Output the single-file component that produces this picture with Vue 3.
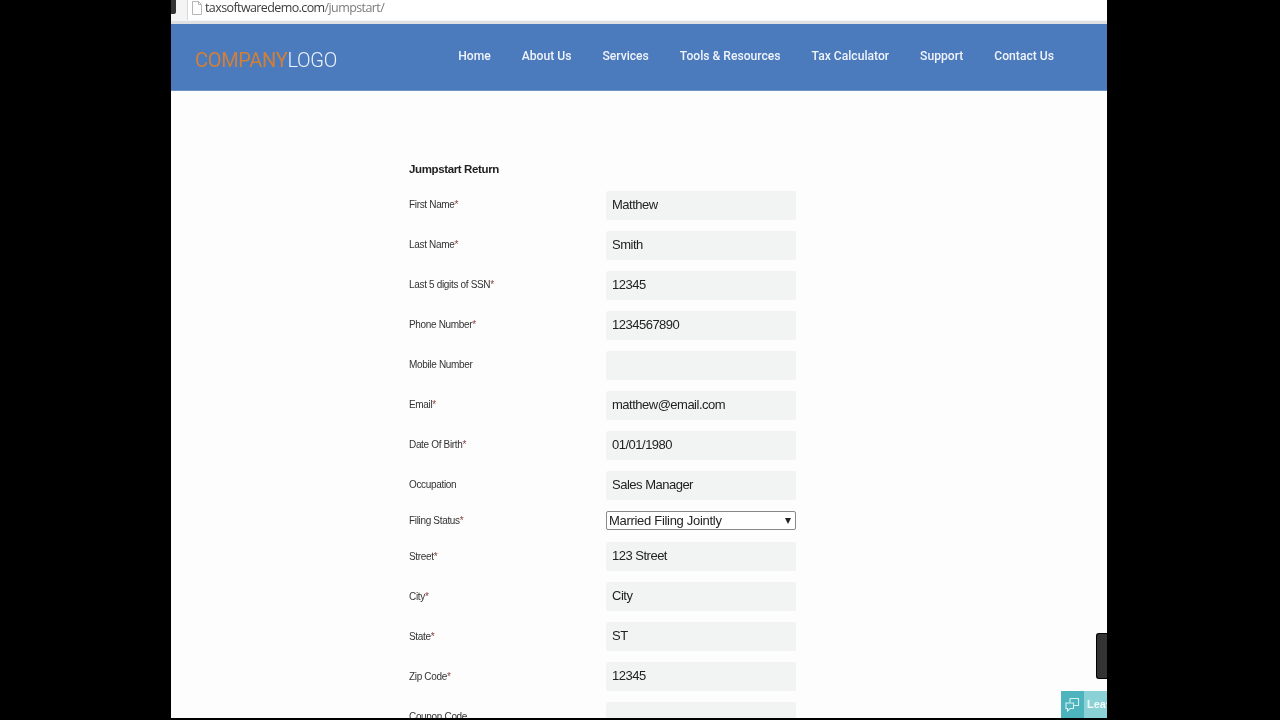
<script setup>
const nav = ['Home', 'About Us', 'Services', 'Tools & Resources', 'Tax Calculator', 'Support', 'Contact Us']
const fieldsTop = [
  { label: 'First Name', req: true, value: 'Matthew' },
  { label: 'Last Name', req: true, value: 'Smith' },
  { label: 'Last 5 digits of SSN', req: true, value: '12345' },
  { label: 'Phone Number', req: true, value: '1234567890' },
  { label: 'Mobile Number', req: false, value: '' },
  { label: 'Email', req: true, value: 'matthew@email.com' },
  { label: 'Date Of Birth', req: true, value: '01/01/1980' },
  { label: 'Occupation', req: false, value: 'Sales Manager' }
]
const fieldsBottom = [
  { label: 'Street', req: true, value: '123 Street' },
  { label: 'City', req: true, value: 'City' },
  { label: 'State', req: true, value: 'ST' },
  { label: 'Zip Code', req: true, value: '12345' },
  { label: 'Coupon Code', req: false, value: '' }
]
</script>

<template>
  <div class="screen">
    <div class="window">
      <div class="browser-bar">
        <div class="cursor-mark"></div>
        <div class="address">
          <svg class="page-icon" width="10" height="14" viewBox="0 0 10 14">
            <path d="M.5.5h6l3 3v10h-9z" fill="#fff" stroke="#b5b5b5" />
            <path d="M6.5.5v3h3" fill="none" stroke="#b5b5b5" />
          </svg>
          <span class="url"><span class="host">taxsoftwaredemo.com</span>/jumpstart/</span>
        </div>
      </div>
      <header class="site-header">
        <div class="logo"><span class="logo-a">COMPANY</span><span class="logo-b">LOGO</span></div>
        <nav class="nav">
          <a v-for="item in nav" :key="item" class="nav-link">{{ item }}</a>
        </nav>
      </header>
      <main class="content">
        <h1 class="title">Jumpstart Return</h1>
        <div class="form">
          <div v-for="f in fieldsTop" :key="f.label" class="row">
            <div class="label">{{ f.label }}<span v-if="f.req" class="req">*</span></div>
            <div class="field"><span class="val">{{ f.value }}</span></div>
          </div>
          <div class="row row-select">
            <div class="label">Filing Status<span class="req">*</span></div>
            <div class="select"><span class="val">Married Filing Jointly</span><i class="arrow"></i></div>
          </div>
          <div v-for="f in fieldsBottom" :key="f.label" class="row">
            <div class="label">{{ f.label }}<span v-if="f.req" class="req">*</span></div>
            <div class="field"><span class="val">{{ f.value }}</span></div>
          </div>
        </div>
      </main>
      <div class="side-tab"></div>
      <div class="chat">
        <div class="chat-icon">
          <svg width="15" height="15" viewBox="0 0 15 15" fill="none" stroke="#d6f1f2" stroke-width="1.1">
            <path d="M5 1.5h8.5v7H8" />
            <path d="M5 1.5v4" />
            <path d="M1 6h7.5v5.5H5L2.5 14v-2.5H1z" />
          </svg>
        </div>
        <div class="chat-text">Leave</div>
      </div>
    </div>
  </div>
</template>

<style>
html, body { margin: 0; background: #000; }
</style>

<style scoped>
.screen {
  width: 1280px;
  height: 720px;
  background: #000;
  overflow: hidden;
  display: flex;
  justify-content: flex-start;
  padding-left: 171px;
  box-sizing: border-box;
}
.window {
  position: relative;
  width: 936px;
  height: 718px;
  background: #fdfdfd;
  overflow: hidden;
  font-family: "Liberation Sans", Arial, sans-serif;
  filter: blur(0.35px);
}
.browser-bar {
  height: 20px;
  background: #f4f4f4;
  border-bottom: 3px solid #dfe1e3;
  display: flex;
  padding-bottom: 1px;
}
.cursor-mark {
  width: 5px;
  height: 14px;
  margin-right: 11px;
  background: #333;
  border-radius: 0 0 2px 0;
}
.address {
  flex: 1;
  background: #fff;
  border-left: 1px solid #d8d8d8;
  display: flex;
  align-items: flex-start;
  padding: 1px 0 0 4px;
  gap: 3px;
}
.url {
  font-size: 12.5px;
  line-height: 14px;
  color: #7c7c7c;
  font-family: "Open Sans", sans-serif;
  letter-spacing: -0.6px;
}
.host { color: #3c3c3c; }
.site-header {
  height: 67px;
  background: #4b7abd;
  border-bottom: 1px solid #6e93c8;
  box-sizing: border-box;
  display: flex;
  padding: 0 53px 0 24px;
  justify-content: space-between;
}
.logo {
  font-family: Roboto, sans-serif;
  font-weight: 300;
  font-size: 20px;
  letter-spacing: -0.3px;
  line-height: 72px;
  white-space: nowrap;
}
.logo-a { color: #d08038; font-weight: 400; }
.logo-b { color: #eef3fa; }
.nav {
  display: flex;
  gap: 31px;
  padding-top: 24px;
}
.nav-link {
  font-family: Roboto, sans-serif;
  font-weight: 500;
  font-size: 12.14px;
  line-height: 17px;
  color: #f0f4fa;
  white-space: nowrap;
}
.content {
  padding: 71px 0 0 238px;
}
.title {
  margin: 0 0 14px;
  font-size: 11.5px;
  letter-spacing: -0.37px;
  line-height: 15px;
  font-weight: 700;
  color: #222;
}
.row {
  display: flex;
  align-items: center;
  height: 29px;
  margin-bottom: 11px;
}
.row-select {
  height: 19px;
  margin-bottom: 12px;
}
.label {
  width: 197px;
  margin-bottom: 2px;
  font-size: 10px;
  letter-spacing: -0.33px;
  color: #333;
  white-space: nowrap;
}
.row-select .label,
.row-select ~ .row .label {
  margin-bottom: 0;
}
.req { color: #844; }
.field {
  width: 190px;
  height: 29px;
  box-sizing: border-box;
  background: #f2f4f4;
  border-radius: 2px;
  padding-left: 6px;
  line-height: 28px;
  font-size: 13px;
  letter-spacing: -0.5px;
  color: #222;
}
.select {
  width: 190px;
  height: 19px;
  box-sizing: border-box;
  border: 1px solid #888;
  border-radius: 2px;
  background: #fff;
  padding-left: 2px;
  line-height: 17px;
  font-size: 13px;
  letter-spacing: -0.3px;
  color: #222;
  display: flex;
  justify-content: space-between;
  align-items: center;
}
.arrow {
  width: 0;
  height: 0;
  margin-right: 4px;
  border-left: 3px solid transparent;
  border-right: 3px solid transparent;
  border-top: 6px solid #222;
}
.side-tab {
  position: absolute;
  right: 0;
  top: 633px;
  width: 10px;
  height: 44px;
  background: #333;
  border: 1px solid #000;
  border-right: 0;
  border-radius: 3px 0 0 3px;
}
.chat {
  position: absolute;
  right: 0;
  bottom: 0;
  width: 46px;
  height: 27px;
  display: flex;
  overflow: hidden;
}
.chat-icon {
  width: 23px;
  flex: none;
  background: #4db3bd;
  display: flex;
  align-items: center;
  justify-content: center;
}
.chat-text {
  flex: none;
  width: 40px;
  background: #8ad2d6;
  color: #f4fbfb;
  font-weight: 700;
  font-size: 11px;
  line-height: 26px;
  padding-left: 3px;
}
</style>
